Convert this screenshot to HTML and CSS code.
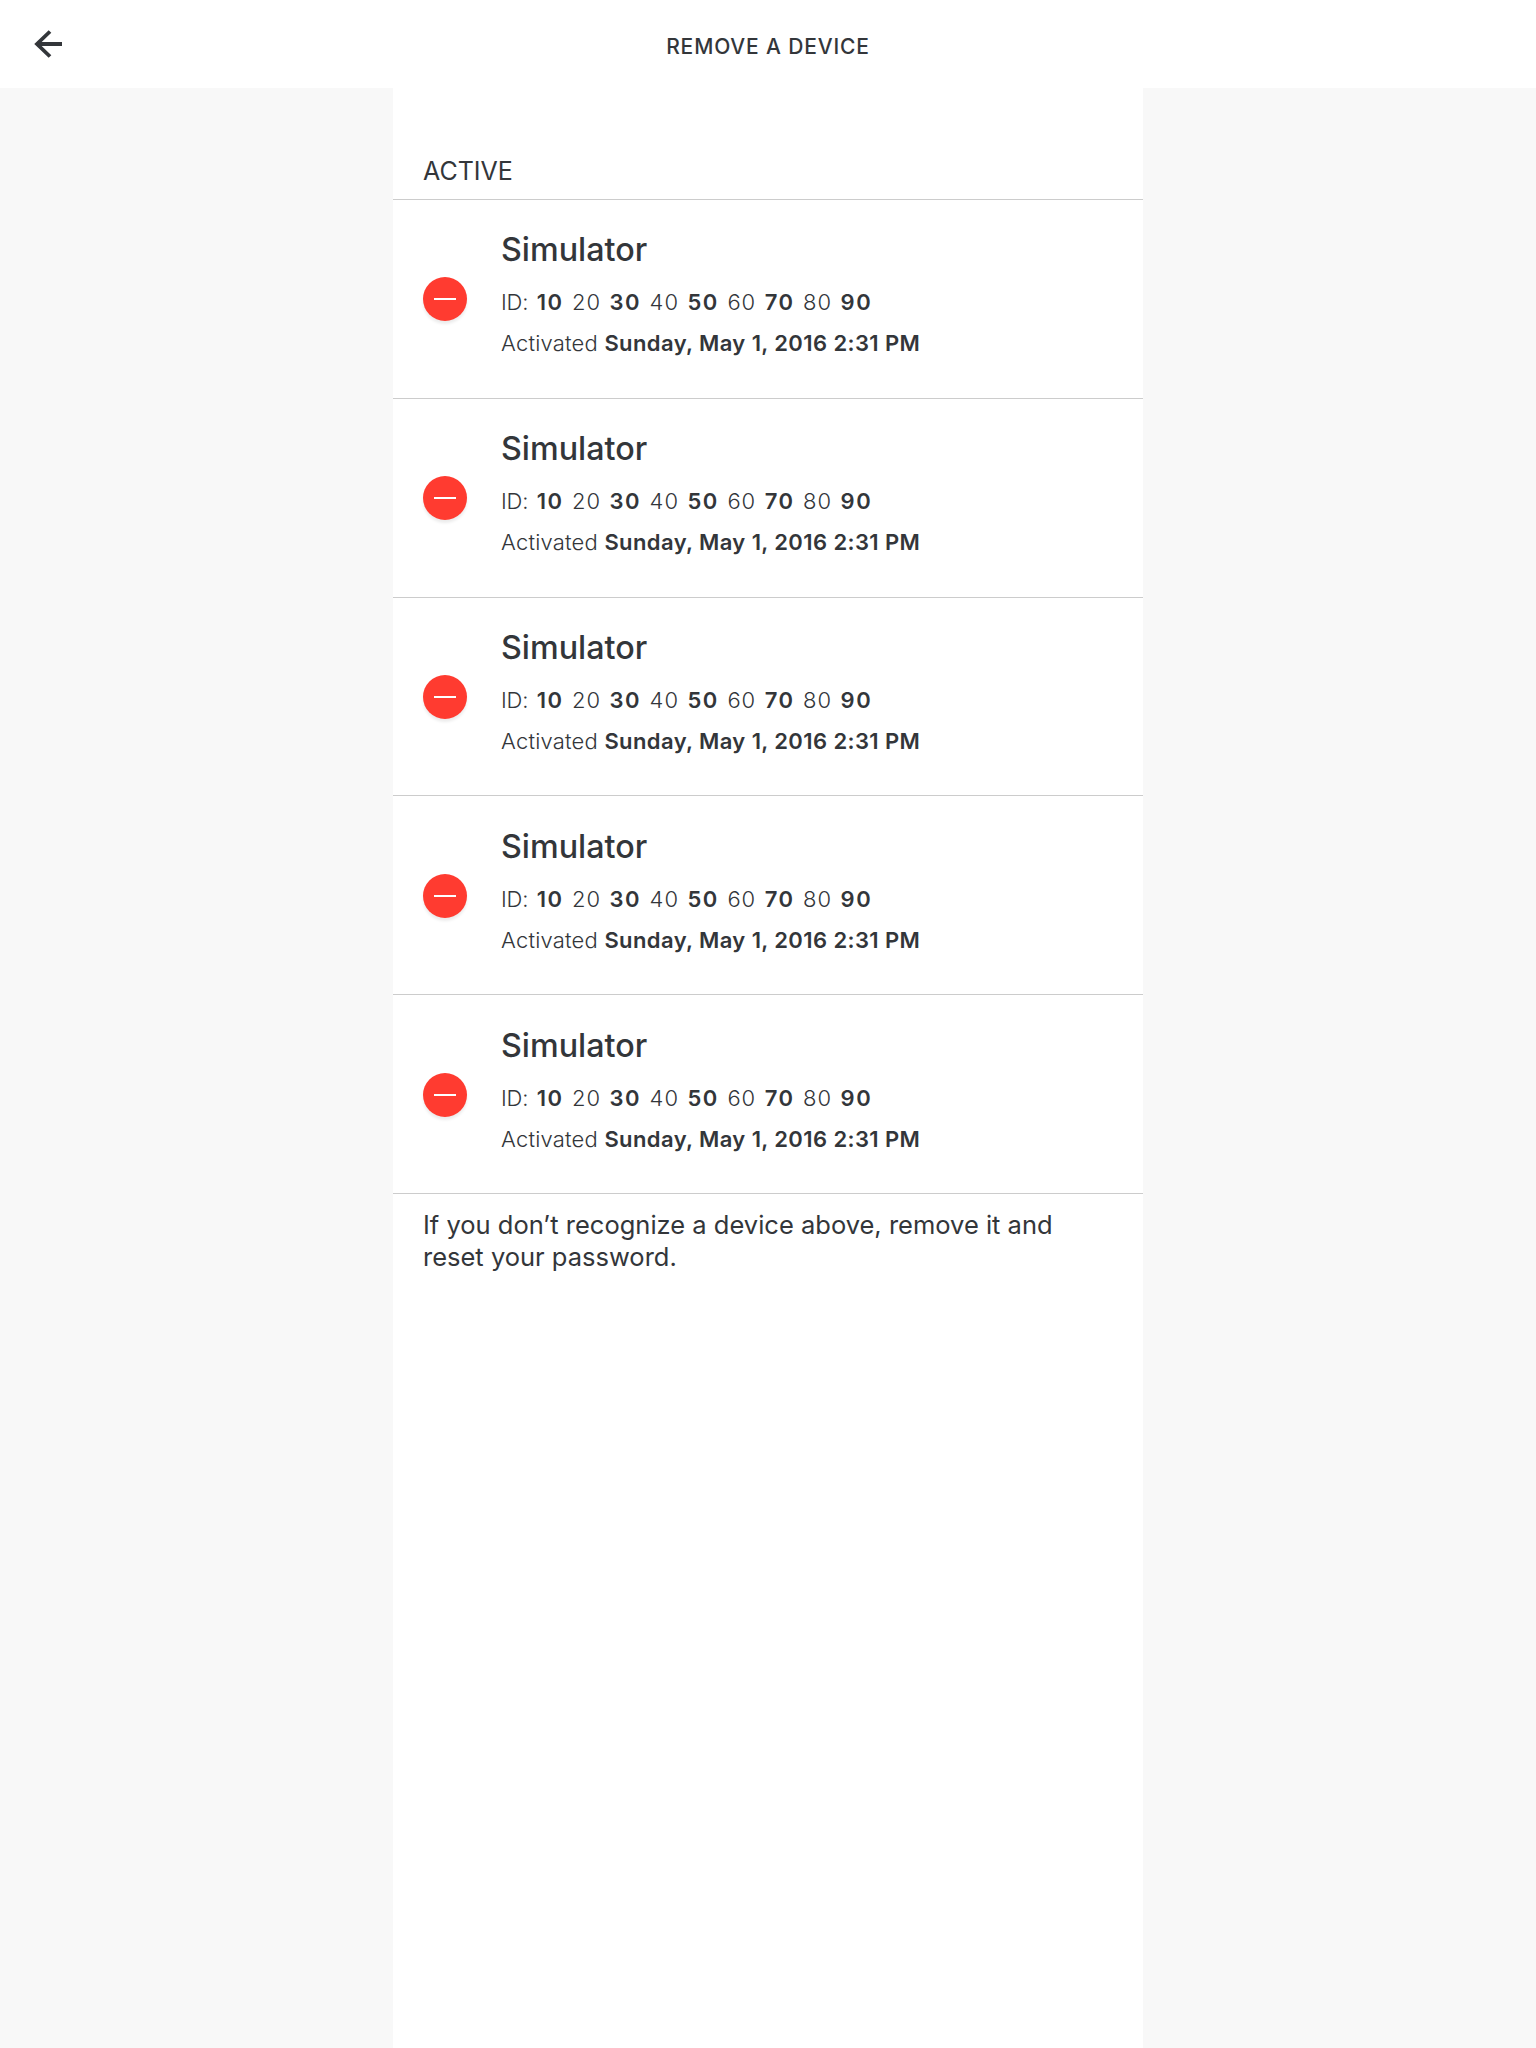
FILE: index.html
```html
<!DOCTYPE html>
<html lang="en">
<head>
    <meta charset="UTF-8">
    <meta name="viewport" content="width=device-width, initial-scale=1.0">
    <title>Remove a device</title>
    <link rel="stylesheet" href="styles.css">
</head>
<body>
    <header class="topbar">
        <svg class="back-icon" width="32" height="32" viewBox="0 0 32 32" aria-hidden="true">
            <path d="M30 16H5M18 3.500 5 16 18 28.500" fill="none" stroke="#33363a" stroke-width="3.800"/>
        </svg>
        <h1 class="topbar-title">REMOVE A DEVICE</h1>
    </header>
    <main class="panel">
        <h2 class="section-title">ACTIVE</h2>
        <ul class="device-list" id="deviceList">
            <li class="device">
                <span class="remove-btn"></span>
                <div class="device-info">
                    <div class="device-name">Simulator</div>
                    <div class="device-id"><span class="id-label">ID:</span> <b>10</b> 20 <b>30</b> 40 <b>50</b> 60 <b>70</b> 80 <b>90</b></div>
                    <div class="device-date">Activated <b>Sunday, May 1, 2016 2:31 PM</b></div>
                </div>
            </li>
            <li class="device">
                <span class="remove-btn"></span>
                <div class="device-info">
                    <div class="device-name">Simulator</div>
                    <div class="device-id"><span class="id-label">ID:</span> <b>10</b> 20 <b>30</b> 40 <b>50</b> 60 <b>70</b> 80 <b>90</b></div>
                    <div class="device-date">Activated <b>Sunday, May 1, 2016 2:31 PM</b></div>
                </div>
            </li>
            <li class="device">
                <span class="remove-btn"></span>
                <div class="device-info">
                    <div class="device-name">Simulator</div>
                    <div class="device-id"><span class="id-label">ID:</span> <b>10</b> 20 <b>30</b> 40 <b>50</b> 60 <b>70</b> 80 <b>90</b></div>
                    <div class="device-date">Activated <b>Sunday, May 1, 2016 2:31 PM</b></div>
                </div>
            </li>
            <li class="device">
                <span class="remove-btn"></span>
                <div class="device-info">
                    <div class="device-name">Simulator</div>
                    <div class="device-id"><span class="id-label">ID:</span> <b>10</b> 20 <b>30</b> 40 <b>50</b> 60 <b>70</b> 80 <b>90</b></div>
                    <div class="device-date">Activated <b>Sunday, May 1, 2016 2:31 PM</b></div>
                </div>
            </li>
            <li class="device">
                <span class="remove-btn"></span>
                <div class="device-info">
                    <div class="device-name">Simulator</div>
                    <div class="device-id"><span class="id-label">ID:</span> <b>10</b> 20 <b>30</b> 40 <b>50</b> 60 <b>70</b> 80 <b>90</b></div>
                    <div class="device-date">Activated <b>Sunday, May 1, 2016 2:31 PM</b></div>
                </div>
            </li>
        </ul>
        <p class="note">If you don’t recognize a device above, remove it and reset your password.</p>
    </main>
</body>
</html>
```

FILE: styles.css
```css
body {
    font-family: Inter, "Noto Sans", sans-serif;
    background-color: #f8f8f8;
    color: #33363a;
    margin: 0;
    padding: 0;
}

.topbar {
    height: 88px;
    background-color: #fff;
    display: flex;
    align-items: center;
    justify-content: center;
    position: relative;
}

.back-icon {
    position: absolute;
    left: 32px;
    top: 28px;
}

.topbar-title {
    margin: 4px 0 0;
    font-size: 21px;
    font-weight: 500;
    letter-spacing: 0.850px;
}

.panel {
    width: 750px;
    height: 1960px;
    margin: 0 auto;
    background-color: #fff;
}

.section-title {
    margin: 0;
    padding: 68px 30px 0;
    height: 43px;
    font-size: 25px;
    line-height: 30px;
    font-weight: 400;
    border-bottom: 1px solid #ccc;
}

.device-list {
    list-style-type: none;
    margin: 0;
    padding: 0;
}

.device {
    height: 197.800px;
    display: flex;
    align-items: center;
    padding-left: 30px;
    border-bottom: 1px solid #ccc;
}

.remove-btn {
    width: 44px;
    height: 44px;
    flex-shrink: 0;
    border-radius: 50%;
    background-color: #ff3b30;
    box-shadow: 0 3px 3px rgba(0, 0, 0, 0.08);
    margin-top: 1px;
    margin-right: 34px;
    display: flex;
    align-items: center;
    justify-content: center;
}

.remove-btn::before {
    content: "";
    width: 22px;
    height: 2px;
    background-color: #fff;
}

.device-info {
    padding-bottom: 11px;
}

.device-name {
    font-size: 32.300px;
    line-height: 40px;
    font-weight: 500;
    margin-bottom: 19px;
}

.device-id {
    font-size: 22px;
    line-height: 26px;
    font-weight: 300;
    letter-spacing: 1px;
    word-spacing: 1.300px;
    margin-bottom: 15px;
}

.id-label {
    letter-spacing: -0.200px;
}

.device-id b {
    font-weight: 600;
    letter-spacing: 1.500px;
}

.device-date {
    font-size: 22px;
    line-height: 26px;
    font-weight: 300;
    letter-spacing: 0.200px;
}

.device-date b {
    font-weight: 600;
    letter-spacing: 0.400px;
}

.note {
    margin: 0;
    padding: 15px 30px 0;
    font-size: 25.500px;
    line-height: 32px;
    font-weight: 400;
}
```
